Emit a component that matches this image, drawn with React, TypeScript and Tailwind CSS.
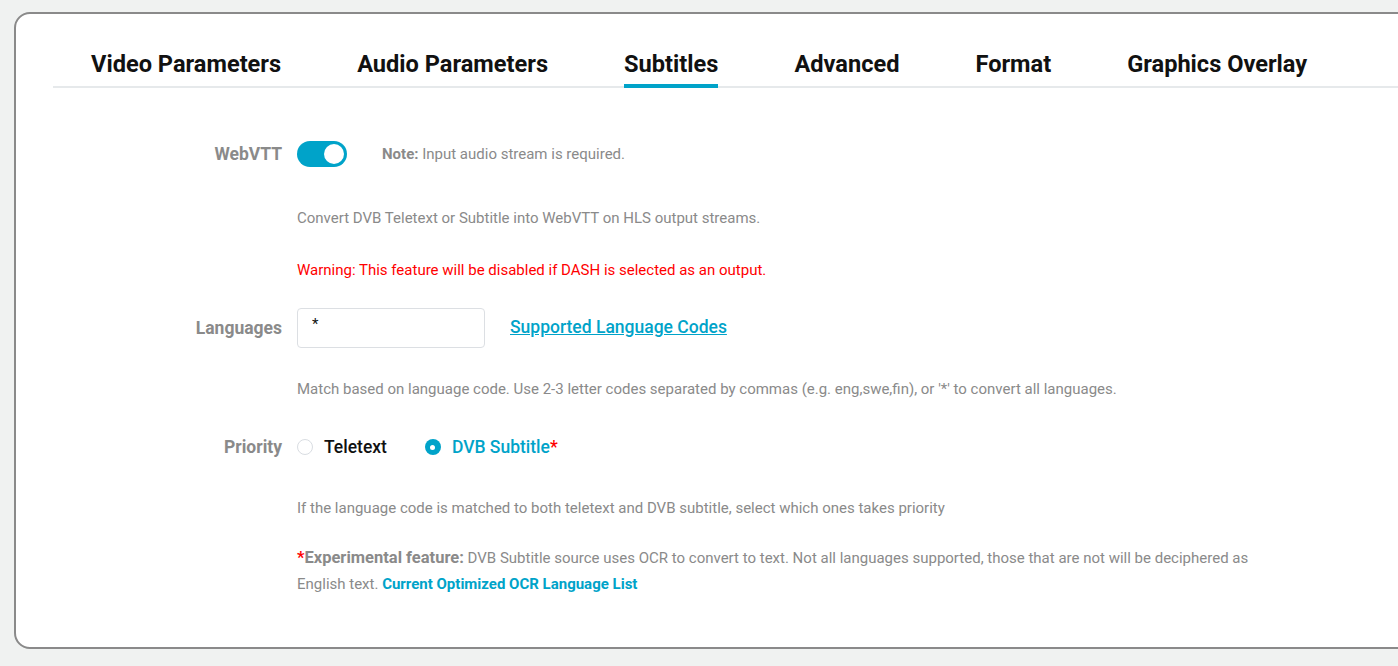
import { useState } from "react"

const tabs = ["Video Parameters", "Audio Parameters", "Subtitles", "Advanced", "Format", "Graphics Overlay"]

function Toggle({ on, onChange }: { on: boolean; onChange: () => void }) {
  return (
    <button
      onClick={onChange}
      className={`relative flex h-[26px] w-[50px] shrink-0 items-center rounded-full px-[3px] ${
        on ? "justify-end bg-[#00a3c9]" : "justify-start bg-[#d5d9dc]"
      }`}
    >
      <span className="block h-[20px] w-[20px] rounded-full bg-white" />
    </button>
  )
}

function Radio({ checked, label, onClick, star }: { checked: boolean; label: string; onClick: () => void; star?: boolean }) {
  return (
    <label onClick={onClick} className="flex cursor-pointer items-center gap-[11px]">
      {checked ? (
        <span className="flex h-[16px] w-[16px] items-center justify-center rounded-full bg-[#00a3c9]">
          <span className="h-[5px] w-[5px] rounded-full bg-white" />
        </span>
      ) : (
        <span className="h-[16px] w-[16px] rounded-full border border-[#d9dde2] bg-white" />
      )}
      <span className={`text-[17.5px] font-medium leading-[22px] ${checked ? "text-[#00a3c9]" : "text-[#111]"}`}>
        {label}
        {star && <span className="text-[#ff0000]">*</span>}
      </span>
    </label>
  )
}

// Single form row: right-aligned label column + control column.
function Row({ label, className, children }: { label?: string; className?: string; children: React.ReactNode }) {
  return (
    <div className={`grid grid-cols-[266px_1fr] items-center gap-x-[15px] ${className ?? ""}`}>
      <div className="text-right text-[17.5px] font-bold leading-[22px] text-[#8a8a8a]">{label}</div>
      <div className="min-w-0">{children}</div>
    </div>
  )
}

export default function App() {
  const [active, setActive] = useState("Subtitles")
  const [webvtt, setWebvtt] = useState(true)
  const [langs, setLangs] = useState("*")
  const [priority, setPriority] = useState<"teletext" | "dvb">("dvb")

  return (
    <div className="min-h-screen overflow-hidden bg-[#f0f2f1] pl-[14px] pt-[12px] font-['Roboto',sans-serif]">
      <div className="w-[1420px] rounded-[16px] border-2 border-[#8a8a8a] bg-white pb-[50px]">
        {/* tab bar */}
        <div className="ml-[37px] flex gap-[76px] border-b-2 border-[#e6e9eb] pl-[38px] pt-[36px]">
          {tabs.map((t) => (
            <button
              key={t}
              onClick={() => setActive(t)}
              className={`-mb-[2px] border-b-4 pb-[6px] text-[23.6px] font-bold leading-[28px] text-[#111] ${
                active === t ? "border-[#00a3c9]" : "border-transparent"
              }`}
            >
              {t}
            </button>
          ))}
        </div>

        <Row label="WebVTT" className="mt-[53px]">
          <div className="flex items-center gap-[35px]">
            <Toggle on={webvtt} onChange={() => setWebvtt(!webvtt)} />
            <p className="text-[15px] leading-[20px] text-[#8a8a8a]">
              <span className="font-bold">Note:</span> Input audio stream is required.
            </p>
          </div>
        </Row>

        <Row className="mt-[41px]">
          <p className="text-[15px] leading-[20px] text-[#8a8a8a]">
            Convert DVB Teletext or Subtitle into WebVTT on HLS output streams.
          </p>
        </Row>
        <Row className="mt-[32px]">
          <p className="text-[15px] leading-[20px] text-[#ff0000]">
            Warning: This feature will be disabled if DASH is selected as an output.
          </p>
        </Row>

        <Row label="Languages" className="mt-[28px]">
          <div className="flex items-center gap-[25px]">
            <input
              value={langs}
              onChange={(e) => setLangs(e.target.value)}
              className="h-[40px] w-[188px] rounded-[4px] border border-[#dcdfe3] px-[14px] pb-[8px] text-[15px] text-[#111] outline-none"
            />
            <a href="#" className="pb-[2px] text-[17.5px] font-medium leading-[22px] text-[#00a3c9] underline">
              Supported Language Codes
            </a>
          </div>
        </Row>

        <Row className="mt-[31px]">
          <p className="text-[15px] leading-[20px] text-[#8a8a8a]">
            Match based on language code. Use 2-3 letter codes separated by commas (e.g. eng,swe,fin), or '*' to convert
            all languages.
          </p>
        </Row>

        <Row label="Priority" className="mt-[37px]">
          <div className="flex items-center gap-[38px]">
            <Radio checked={priority === "teletext"} label="Teletext" onClick={() => setPriority("teletext")} />
            <Radio checked={priority === "dvb"} label="DVB Subtitle" star onClick={() => setPriority("dvb")} />
          </div>
        </Row>

        <Row className="mt-[40px]">
          <p className="text-[15px] leading-[20px] text-[#8a8a8a]">
            If the language code is matched to both teletext and DVB subtitle, select which ones takes priority
          </p>
        </Row>

        <Row className="mt-[27px]">
          <p className="max-w-[960px] text-[15px] leading-[26px] text-[#8a8a8a]">
            <span className="text-[16.5px] font-bold">
              <span className="text-[#ff0000]">*</span>Experimental feature:
            </span>{" "}
            DVB Subtitle source uses OCR to convert to text. Not all languages supported, those that are not will be
            deciphered as English text.{" "}
            <a href="#" className="font-bold text-[#00a3c9]">
              Current Optimized OCR Language List
            </a>
          </p>
        </Row>
      </div>
    </div>
  )
}
